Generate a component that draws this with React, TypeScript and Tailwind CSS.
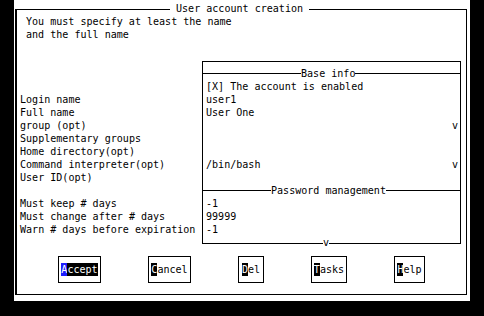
const ROW = "h-[13px] leading-[13px] whitespace-pre";

const labels = [
  "Login name",
  "Full name",
  "group (opt)",
  "Supplementary groups",
  "Home directory(opt)",
  "Command interpreter(opt)",
  "User ID(opt)",
  "",
  "Must keep # days",
  "Must change after # days",
  "Warn # days before expiration",
];

type Line =
  | { kind: "sep"; title: string; lead: string }
  | { kind: "field"; value: string; more?: boolean };

const lines: Line[] = [
  { kind: "sep", title: "Base info", lead: "w-[98px]" },
  { kind: "field", value: "[X] The account is enabled" },
  { kind: "field", value: "user1" },
  { kind: "field", value: "User One" },
  { kind: "field", value: "", more: true },
  { kind: "field", value: "" },
  { kind: "field", value: "" },
  { kind: "field", value: "/bin/bash", more: true },
  { kind: "field", value: "" },
  { kind: "sep", title: "Password management", lead: "w-[68px]" },
  { kind: "field", value: "-1" },
  { kind: "field", value: "99999" },
  { kind: "field", value: "-1" },
];

const buttons = [
  { key: "A", rest: "ccept", width: "w-[43px]", active: true },
  { key: "C", rest: "ancel", width: "w-[43px]", active: false },
  { key: "D", rest: "el", width: "w-[26px]", active: false },
  { key: "T", rest: "asks", width: "w-[36px]", active: false },
  { key: "H", rest: "elp", width: "w-[31px]", active: false },
];

function Separator({ title, lead }: { title: string; lead: string }) {
  return (
    <div className={`${ROW} flex items-center`}>
      <div className={`${lead} h-px bg-black`} />
      <span>{title}</span>
      <div className="flex-1 h-px bg-black" />
    </div>
  );
}

export default function App() {
  return (
    <div className="w-[484px] h-[316px] bg-black overflow-hidden font-['DejaVu_Sans_Mono',monospace] text-[10.05px] text-black">
      <div className="ml-[14px] w-[456px] h-[301px] bg-white pt-[9px] pl-px">
        <div className="relative w-[452px] h-[286px] border border-l-2 border-black pl-[3px]">
          <span className={`${ROW} absolute left-[153px] -top-[7.7px] px-[6px] bg-white`}>
            User account creation
          </span>

          <div className="pt-[5.3px] pl-[6px]">
            <div className={ROW}>You must specify at least the name</div>
            <div className={ROW}>and the full name</div>
          </div>

          <div className="mt-[19.5px] flex">
            <div className="w-[182px] pt-[32.5px]">
              {labels.map((l, i) => (
                <div key={i} className={ROW}>
                  {l}
                </div>
              ))}
            </div>

            <div className="relative w-[259px] h-[183px] border border-black pt-[5.5px]">
              {lines.map((ln, i) =>
                ln.kind === "sep" ? (
                  <Separator key={i} title={ln.title} lead={ln.lead} />
                ) : (
                  <div key={i} className={`${ROW} flex justify-between pl-[3px] pr-[2px]`}>
                    <span>{ln.value}</span>
                    {ln.more && <span>v</span>}
                  </div>
                )
              )}
              <span className={`${ROW} absolute left-[120px] top-[174.5px] bg-white`}>v</span>
            </div>
          </div>

          <div className="mt-[12px] flex gap-[47px] pl-[38px]">
            {buttons.map((b) => (
              <div
                key={b.key}
                className={`${b.width} h-[27px] border border-black flex items-center justify-center`}
              >
                <span className={`${ROW} flex`}>
                  <span className={b.active ? "bg-[#1c1cff] text-white" : "bg-black text-white"}>
                    {b.key}
                  </span>
                  <span className={b.active ? "bg-black text-white" : ""}>{b.rest}</span>
                </span>
              </div>
            ))}
          </div>
        </div>
      </div>
    </div>
  );
}
